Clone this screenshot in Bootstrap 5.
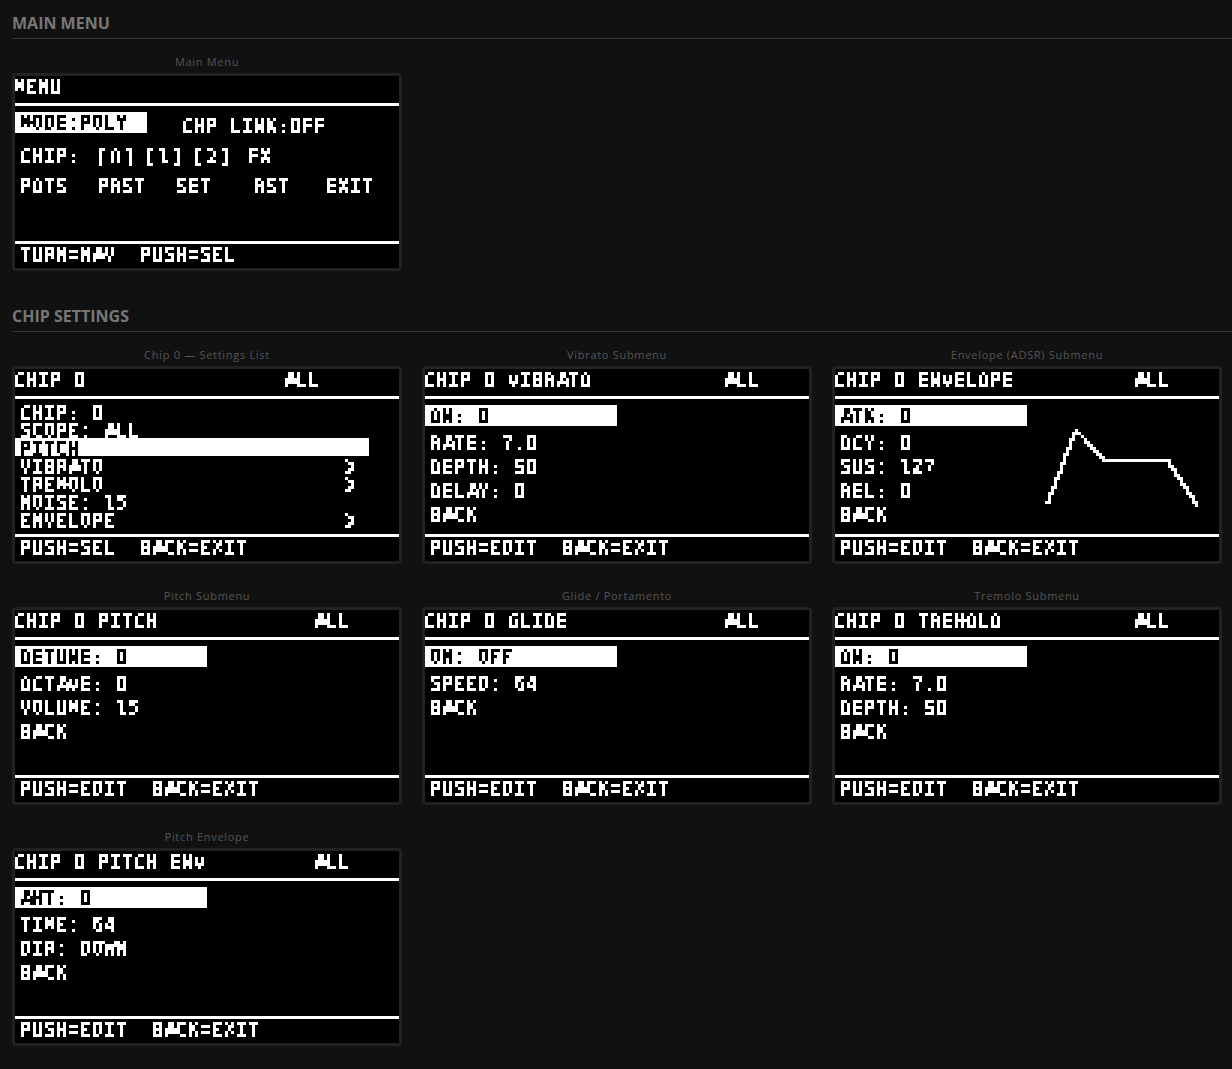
<!DOCTYPE html>
<html lang="en">
<head>
<meta charset="utf-8">
<title>OLED menus</title>
<link href="https://cdn.jsdelivr.net/npm/bootstrap@5.3.0/dist/css/bootstrap.min.css" rel="stylesheet">
<style>
body{background:#111;margin:0;padding:12px 0 0 12px;overflow-x:hidden}
.sec-head{font-family:"Open Sans","Noto Sans",sans-serif;font-weight:700;font-size:16px;line-height:22px;color:#777;border-bottom:1px solid #333;padding-bottom:4px;margin:0 0 15px}
.sec-gap{margin-top:34px}
.shots{display:flex;flex-wrap:wrap;column-gap:20px;row-gap:24px;width:1210px}
.shot{width:390px}
.shot-cap{font-family:"Open Sans","Noto Sans",sans-serif;font-size:11px;line-height:15px;letter-spacing:.7px;color:#555;text-align:center;margin-bottom:4px}
.oled-frame{width:390px;height:198px;border:3px solid #222;border-radius:4px;background:#000}
.oled{width:384px;height:192px;background:#000;color:#fff;font-family:"DejaVu Sans Mono",monospace;font-weight:400;font-size:19.93px;line-height:15px;filter:url(#oledpx);overflow:hidden}
.zr{font-family:"Liberation Sans",sans-serif;font-size:21.6px}
.aa{font-family:"Liberation Mono",monospace;font-size:22.7px;letter-spacing:-1.62px;margin-left:1px;margin-right:-1px}
.eq{display:inline-block;transform:scaleY(1.5)}
.gt{display:inline-block;font-weight:700;transform:translateX(-1px) scale(.8,1.6)}
.bl{display:inline-block;transform:translateX(-3px) scaleX(1.5)}
.br{display:inline-block;transform:translateX(2px) scaleX(1.5)}
.oled-top{height:27px;padding:3px 0 0 0;margin-left:-1.5px;display:grid;grid-template-columns:300px auto}
.oled-top.wide{grid-template-columns:270px auto}
.oled-body{height:138px;border-top:3px solid #fff;padding-top:6px}
.oled-foot{height:27px;border-top:3px solid #fff;padding:3px 0 0 4.5px;white-space:pre}
.oled-sel{background:#fff;color:#000;height:21px;padding:3px 0 0 4.5px;filter:url(#oledinv)}
.oled-sel.w192{width:192px}
.oled-sel.w132{width:132px}
.oled-row{height:15px;margin-top:9px;padding-left:4.5px}
.oled-row.m15{margin-top:15px}
.grid-chip{display:grid;grid-template-columns:78px 48px 48px 54px auto}
.grid-menu{display:grid;grid-template-columns:78px 78px 78px 72px auto}
.oled-side{margin:6px 0 0 34.5px}
.oled-list{padding-left:0}
.oled-list .li{height:15px;margin-top:3px;display:flex;justify-content:space-between;width:342px;padding-left:4.5px}
.oled-list .li:first-child{margin-top:0}
.oled-list .lisel{width:354px;height:18px;background:#fff;color:#000;padding:3px 0 0 4.5px;filter:url(#oledinv)}
.env-col{width:192px}
.env-graph{width:192px;height:132px;margin-top:-6px}
</style>
</head>
<body>
<svg width="0" height="0" class="position-absolute" aria-hidden="true">
  <filter id="oledpx" x="0" y="0" width="384" height="192" filterUnits="userSpaceOnUse" primitiveUnits="userSpaceOnUse" color-interpolation-filters="sRGB">
    <feConvolveMatrix order="3" kernelMatrix="1 1 1 1 1 1 1 1 1" divisor="9" edgeMode="duplicate" preserveAlpha="true" result="avg"/>
    <feFlood x="1" y="1" width="1" height="1" flood-color="#000"/>
    <feComposite width="3" height="3"/>
    <feTile result="grid"/>
    <feComposite in="avg" in2="grid" operator="in"/>
    <feMorphology operator="dilate" radius="1"/>
    <feComponentTransfer>
      <feFuncR type="discrete" tableValues="0 1 1"/>
      <feFuncG type="discrete" tableValues="0 1 1"/>
      <feFuncB type="discrete" tableValues="0 1 1"/>
    </feComponentTransfer>
  </filter>
  <filter id="oledinv" x="0" y="0" width="384" height="192" filterUnits="userSpaceOnUse" primitiveUnits="userSpaceOnUse" color-interpolation-filters="sRGB">
    <feConvolveMatrix order="3" kernelMatrix="1 1 1 1 1 1 1 1 1" divisor="9" edgeMode="duplicate" preserveAlpha="true" result="avg"/>
    <feFlood x="1" y="1" width="1" height="1" flood-color="#000"/>
    <feComposite width="3" height="3"/>
    <feTile result="grid"/>
    <feComposite in="avg" in2="grid" operator="in"/>
    <feMorphology operator="dilate" radius="1"/>
    <feComponentTransfer>
      <feFuncR type="discrete" tableValues="0 0 0 0 0 0 0 1 1 1"/>
      <feFuncG type="discrete" tableValues="0 0 0 0 0 0 0 1 1 1"/>
      <feFuncB type="discrete" tableValues="0 0 0 0 0 0 0 1 1 1"/>
    </feComponentTransfer>
  </filter>
</svg>

<h2 class="sec-head">MAIN MENU</h2>
<div class="shots">
  <div class="shot">
    <div class="shot-cap">Main Menu</div>
    <div class="oled-frame"><div class="oled">
      <div class="oled-top"><span>MENU</span></div>
      <div class="oled-body">
        <div class="d-flex"><div class="oled-sel w132">MODE:POLY</div><div class="oled-side">CHP LINK:<span class="zr">0</span>FF</div></div>
        <div class="oled-row m15 grid-chip"><span>CHIP:</span><span><span class="bl">[</span><span class="zr">0</span><span class="br">]</span></span><span><span class="bl">[</span>1<span class="br">]</span></span><span><span class="bl">[</span>2<span class="br">]</span></span><span>FX</span></div>
        <div class="oled-row m15 grid-menu"><span>POTS</span><span>PRST</span><span>SET</span><span>RST</span><span>EXIT</span></div>
      </div>
      <div class="oled-foot">TURN<span class="eq">=</span>N<span class="aa">A</span>V  PUSH<span class="eq">=</span>SEL</div>
    </div></div>
  </div>
</div>

<h2 class="sec-head sec-gap">CHIP SETTINGS</h2>
<div class="shots">
  <div class="shot">
    <div class="shot-cap">Chip 0 — Settings List</div>
    <div class="oled-frame"><div class="oled">
      <div class="oled-top wide"><span>CHIP <span class="zr">0</span></span><span><span class="aa">A</span>LL</span></div>
      <div class="oled-body oled-list">
        <div class="li"><span>CHIP: <span class="zr">0</span></span></div>
        <div class="li"><span>SCOPE: <span class="aa">A</span>LL</span></div>
        <div class="lisel">PITCH</div>
        <div class="li"><span>VIBR<span class="aa">A</span>TO</span><span class="gt">&gt;</span></div>
        <div class="li"><span>TREMOLO</span><span class="gt">&gt;</span></div>
        <div class="li"><span>NOISE: 15</span></div>
        <div class="li"><span>ENVELOPE</span><span class="gt">&gt;</span></div>
      </div>
      <div class="oled-foot">PUSH<span class="eq">=</span>SEL  B<span class="aa">A</span>CK<span class="eq">=</span>EXIT</div>
    </div></div>
  </div>
  <div class="shot">
    <div class="shot-cap">Vibrato Submenu</div>
    <div class="oled-frame"><div class="oled">
      <div class="oled-top"><span>CHIP <span class="zr">0</span> VIBR<span class="aa">A</span>TO</span><span><span class="aa">A</span>LL</span></div>
      <div class="oled-body">
        <div class="oled-sel w192">ON: <span class="zr">0</span></div>
        <div class="oled-row">R<span class="aa">A</span>TE: 7.<span class="zr">0</span></div>
        <div class="oled-row">DEPTH: 5<span class="zr">0</span></div>
        <div class="oled-row">DEL<span class="aa">A</span>Y: <span class="zr">0</span></div>
        <div class="oled-row">B<span class="aa">A</span>CK</div>
      </div>
      <div class="oled-foot">PUSH<span class="eq">=</span>EDIT  B<span class="aa">A</span>CK<span class="eq">=</span>EXIT</div>
    </div></div>
  </div>
  <div class="shot">
    <div class="shot-cap">Envelope (ADSR) Submenu</div>
    <div class="oled-frame"><div class="oled">
      <div class="oled-top"><span>CHIP <span class="zr">0</span> ENVELOPE</span><span><span class="aa">A</span>LL</span></div>
      <div class="oled-body d-flex">
        <div class="env-col">
          <div class="oled-sel w192"><span class="aa">A</span>TK: <span class="zr">0</span></div>
          <div class="oled-row">DCY: <span class="zr">0</span></div>
          <div class="oled-row">SUS: 127</div>
          <div class="oled-row">REL: <span class="zr">0</span></div>
          <div class="oled-row">B<span class="aa">A</span>CK</div>
        </div>
        <svg class="env-graph" viewBox="0 0 192 132" fill="none" stroke="#fff" stroke-width="3" aria-hidden="true"><path d="M20 106 L49 31 L78 61 L140 61 L170 106"/></svg>
      </div>
      <div class="oled-foot">PUSH<span class="eq">=</span>EDIT  B<span class="aa">A</span>CK<span class="eq">=</span>EXIT</div>
    </div></div>
  </div>
  <div class="shot">
    <div class="shot-cap">Pitch Submenu</div>
    <div class="oled-frame"><div class="oled">
      <div class="oled-top"><span>CHIP <span class="zr">0</span> PITCH</span><span><span class="aa">A</span>LL</span></div>
      <div class="oled-body">
        <div class="oled-sel w192">DETUNE: <span class="zr">0</span></div>
        <div class="oled-row">OCT<span class="aa">A</span>VE: <span class="zr">0</span></div>
        <div class="oled-row">VOLUME: 15</div>
        <div class="oled-row">B<span class="aa">A</span>CK</div>
      </div>
      <div class="oled-foot">PUSH<span class="eq">=</span>EDIT  B<span class="aa">A</span>CK<span class="eq">=</span>EXIT</div>
    </div></div>
  </div>
  <div class="shot">
    <div class="shot-cap">Glide / Portamento</div>
    <div class="oled-frame"><div class="oled">
      <div class="oled-top"><span>CHIP <span class="zr">0</span> GLIDE</span><span><span class="aa">A</span>LL</span></div>
      <div class="oled-body">
        <div class="oled-sel w192">ON: OFF</div>
        <div class="oled-row">SPEED: 64</div>
        <div class="oled-row">B<span class="aa">A</span>CK</div>
      </div>
      <div class="oled-foot">PUSH<span class="eq">=</span>EDIT  B<span class="aa">A</span>CK<span class="eq">=</span>EXIT</div>
    </div></div>
  </div>
  <div class="shot">
    <div class="shot-cap">Tremolo Submenu</div>
    <div class="oled-frame"><div class="oled">
      <div class="oled-top"><span>CHIP <span class="zr">0</span> TREMOLO</span><span><span class="aa">A</span>LL</span></div>
      <div class="oled-body">
        <div class="oled-sel w192">ON: <span class="zr">0</span></div>
        <div class="oled-row">R<span class="aa">A</span>TE: 7.<span class="zr">0</span></div>
        <div class="oled-row">DEPTH: 5<span class="zr">0</span></div>
        <div class="oled-row">B<span class="aa">A</span>CK</div>
      </div>
      <div class="oled-foot">PUSH<span class="eq">=</span>EDIT  B<span class="aa">A</span>CK<span class="eq">=</span>EXIT</div>
    </div></div>
  </div>
  <div class="shot">
    <div class="shot-cap">Pitch Envelope</div>
    <div class="oled-frame"><div class="oled">
      <div class="oled-top"><span>CHIP <span class="zr">0</span> PITCH ENV</span><span><span class="aa">A</span>LL</span></div>
      <div class="oled-body">
        <div class="oled-sel w192"><span class="aa">A</span>MT: <span class="zr">0</span></div>
        <div class="oled-row">TIME: 64</div>
        <div class="oled-row">DIR: DOWN</div>
        <div class="oled-row">B<span class="aa">A</span>CK</div>
      </div>
      <div class="oled-foot">PUSH<span class="eq">=</span>EDIT  B<span class="aa">A</span>CK<span class="eq">=</span>EXIT</div>
    </div></div>
  </div>
</div>
<script src="https://cdn.jsdelivr.net/npm/bootstrap@5.3.0/dist/js/bootstrap.bundle.min.js"></script>
</body>
</html>
